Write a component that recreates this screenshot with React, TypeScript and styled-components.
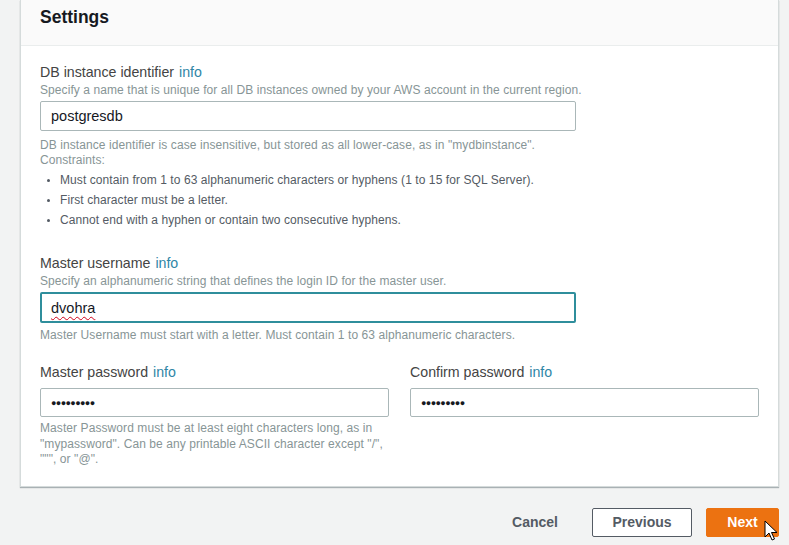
import React from "react";
import styled, { createGlobalStyle } from "styled-components";

const Global = createGlobalStyle`
  html, body { margin: 0; padding: 0; background: #f2f3f3; }
  body { font-family: "Liberation Sans", Arial, sans-serif; width: 789px; height: 545px; overflow: hidden; }
`;

const Page = styled.div`
  position: relative;
  padding: 0 10px 0 20px;
  height: 545px;
  box-sizing: border-box;
`;

const Card = styled.section`
  background: #fff;
  border: 1px solid #d5dbdb;
  border-top: none;
  box-shadow: 0 1px 1px rgba(0, 28, 36, 0.3);
  width: 759px;
  box-sizing: border-box;
`;

const Header = styled.div`
  height: 46px;
  box-sizing: border-box;
  background: #fafafa;
  border-bottom: 1px solid #eaeded;
  padding: 5px 19px 0;
  font-size: 17.5px;
  line-height: 24px;
  font-weight: 700;
  color: #16191f;
`;

const Body = styled.div`
  padding: 16px 19px 18px;
`;

const Group = styled.div<{ $gap?: number }>`
  margin-top: ${(p) => p.$gap ?? 0}px;
`;

const Label = styled.div`
  font-size: 14.2px;
  line-height: 20px;
  color: #444;
`;

const Info = styled.span`
  color: #2f86a6;
  margin-left: 5px;
`;

const Desc = styled.div`
  font-size: 12px;
  letter-spacing: 0.08px;
  line-height: 16px;
  color: #879596;
`;

const Field = styled.div<{ $focused?: boolean; $width?: string; $height?: number; $top?: number }>`
  margin-top: ${(p) => p.$top ?? 5}px;
  width: ${(p) => p.$width ?? "100%"};
  height: ${(p) => p.$height ?? 30}px;
  box-sizing: border-box;
  border: ${(p) => (p.$focused ? "2px solid #2f8e9c" : "1px solid #aab7b8")};
  border-radius: 2px;
  padding: 0 ${(p) => (p.$focused ? 9 : 10)}px;
  display: flex;
  align-items: center;
  font-size: 14.5px;
  color: #16191f;
  background: #fff;
`;

const Squiggle = styled.span`
  text-decoration: underline wavy #d0021b;
  text-decoration-thickness: 1px;
  text-underline-offset: 3px;
`;

const Dots = styled.span`
  font-size: 9px;
  letter-spacing: -0.6px;
  color: #16191f;
`;

const Help = styled.div<{ $lh?: number; $top?: number }>`
  font-size: 12px;
  letter-spacing: 0.08px;
  line-height: ${(p) => p.$lh ?? 15}px;
  color: #879596;
  margin-top: ${(p) => p.$top ?? 5}px;
`;

const List = styled.ul`
  margin: 2px 0 0;
  padding: 0 0 0 20px;
  font-size: 12px;
  letter-spacing: 0.08px;
  line-height: 20px;
  color: #545b64;
  li::marker { font-size: 10px; }
`;

const Columns = styled.div`
  display: grid;
  grid-template-columns: 1fr 1fr;
  column-gap: 21px;
  margin-top: 19px;
`;

const Footer = styled.div`
  display: flex;
  justify-content: flex-end;
  align-items: center;
  gap: 14px;
  width: 759px;
  margin-top: 21px;
`;

const Button = styled.button<{ $variant: "link" | "normal" | "primary" }>`
  height: 29px;
  box-sizing: border-box;
  font-family: inherit;
  font-size: 14px;
  font-weight: 700;
  border-radius: 2px;
  cursor: pointer;
  padding: 0;
  ${(p) =>
    p.$variant === "link"
      ? `background: transparent; border: none; color: #545b64; width: 86px;`
      : p.$variant === "normal"
      ? `background: #fff; border: 1px solid #545b64; color: #545b64; width: 100px;`
      : `background: #ec7211; border: 1px solid #ec7211; color: #fff; width: 73px;`}
`;

const Cursor = styled.svg`
  position: absolute;
  left: 764px;
  top: 520px;
  width: 14px;
  height: 22px;
`;

export default function App() {
  return (
    <Page>
      <Global />
      <Card>
        <Header>Settings</Header>
        <Body>
          <Group>
            <Label>
              DB instance identifier<Info>info</Info>
            </Label>
            <Desc>Specify a name that is unique for all DB instances owned by your AWS account in the current region.</Desc>
            <Field $width="536px" $top={3}>postgresdb</Field>
            <Help $top={7}>
              DB instance identifier is case insensitive, but stored as all lower-case, as in "mydbinstance".
              <br />
              Constraints:
            </Help>
            <List>
              <li>Must contain from 1 to 63 alphanumeric characters or hyphens (1 to 15 for SQL Server).</li>
              <li>First character must be a letter.</li>
              <li>Cannot end with a hyphen or contain two consecutive hyphens.</li>
            </List>
          </Group>
          <Group $gap={23}>
            <Label>
              Master username<Info>info</Info>
            </Label>
            <Desc>Specify an alphanumeric string that defines the login ID for the master user.</Desc>
            <Field $focused $width="536px" $height={31} $top={3}>
              <Squiggle>dvohra</Squiggle>
            </Field>
            <Help $lh={16} $top={4}>Master Username must start with a letter. Must contain 1 to 63 alphanumeric characters.</Help>
          </Group>
          <Columns>
            <div>
              <Label>
                Master password<Info>info</Info>
              </Label>
              <Field $height={29} $top={6}>
                <Dots>●●●●●●●●●</Dots>
              </Field>
              <Help $lh={15.5} $top={4}>
                Master Password must be at least eight characters long, as in "mypassword". Can be any printable ASCII
                character except "/", """, or "@".
              </Help>
            </div>
            <div>
              <Label>
                Confirm password<Info>info</Info>
              </Label>
              <Field $height={29} $top={6}>
                <Dots>●●●●●●●●●</Dots>
              </Field>
            </div>
          </Columns>
        </Body>
      </Card>
      <Footer>
        <Button $variant="link">Cancel</Button>
        <Button $variant="normal">Previous</Button>
        <Button $variant="primary">Next</Button>
      </Footer>
      <Cursor viewBox="0 0 14 22">
        <path d="M1 1 L1 17 L5 13 L8 20 L10.5 19 L7.5 12.5 L13 12.5 Z" fill="#fff" stroke="#000" strokeWidth="1" strokeLinejoin="round" />
      </Cursor>
    </Page>
  );
}
